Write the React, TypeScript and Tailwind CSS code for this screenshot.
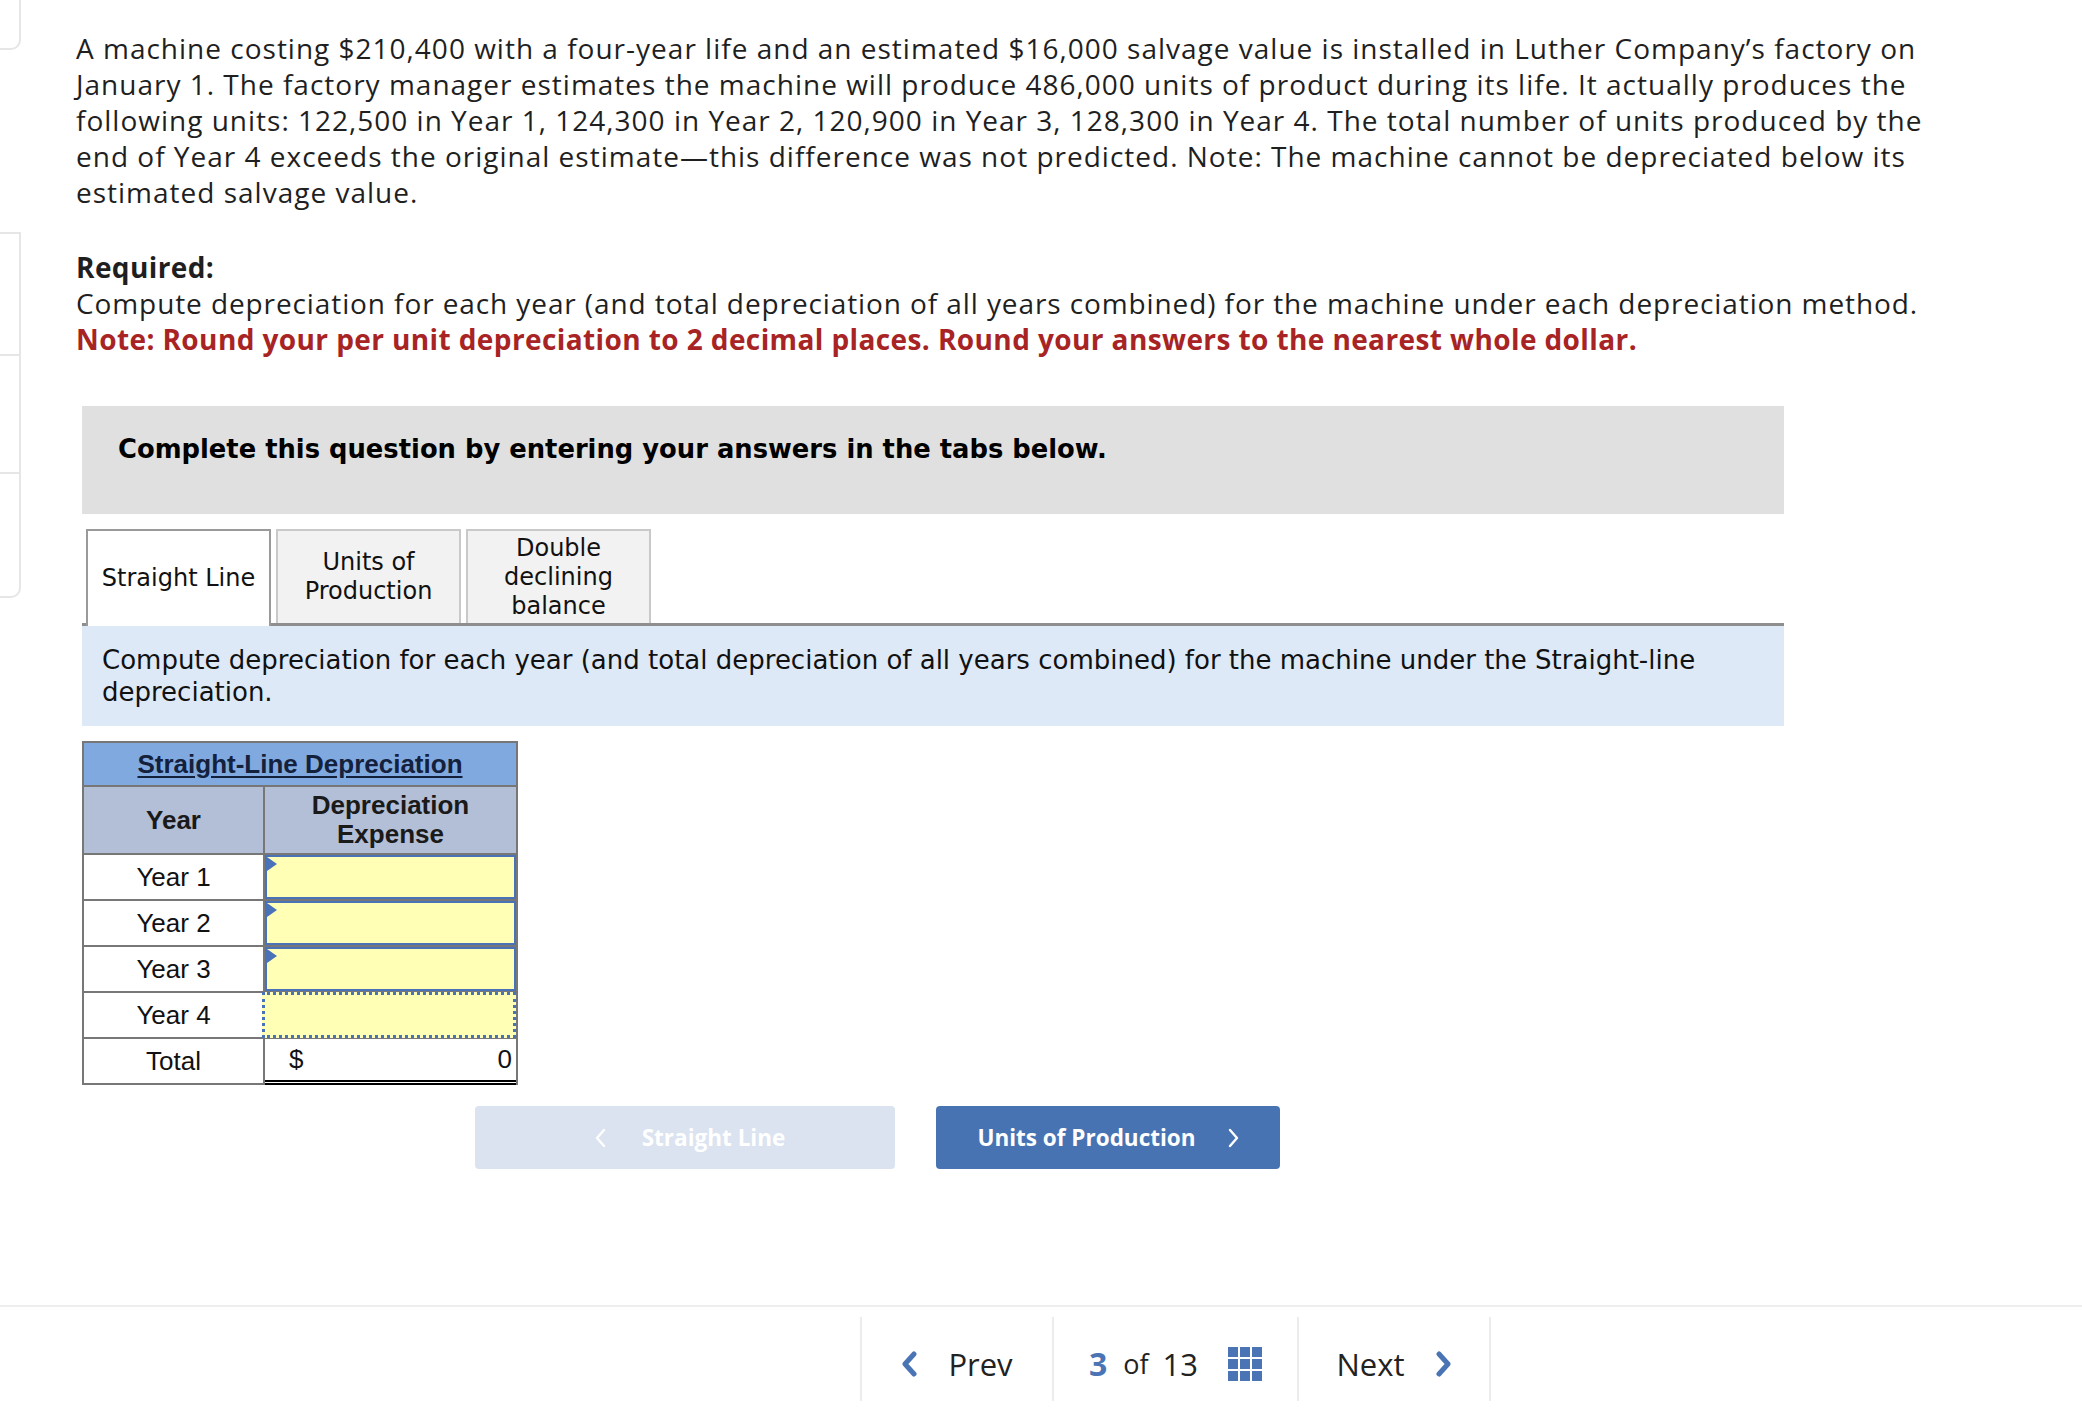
import React from 'react';

const sans = "font-['Open_Sans',sans-serif]";
const verdana = "font-['DejaVu_Sans',Verdana,sans-serif]";
const arial = "font-['Liberation_Sans',Arial,sans-serif]";

function NavChevron({ dir }: { dir: 'left' | 'right' }) {
  return (
    <svg width="17" height="26" viewBox="0 0 17 26" fill="none">
      <path
        d={dir === 'left' ? 'M13 3 L4 13 L13 23' : 'M4 3 L13 13 L4 23'}
        stroke="#4a74b4"
        strokeWidth="5"
        strokeLinecap="round"
        strokeLinejoin="round"
      />
    </svg>
  );
}

function BtnChevron({ dir }: { dir: 'left' | 'right' }) {
  return (
    <svg width="11" height="20" viewBox="0 0 11 20" fill="none">
      <path
        d={dir === 'left' ? 'M9 2 L2 10 L9 18' : 'M2 2 L9 10 L2 18'}
        stroke="#ffffff"
        strokeWidth="2.4"
        strokeLinecap="round"
        strokeLinejoin="round"
      />
    </svg>
  );
}

function InputRow({ label, focused }: { label: string; focused?: boolean }) {
  return (
    <div className="flex h-[46px] border-b-2 border-[#777777]">
      <div className="w-[181px] border-r-2 border-[#777777] flex items-center justify-center text-[26px] text-[#111]">
        {label}
      </div>
      <div className="flex-1 relative">
        {focused ? (
          <div className="absolute -inset-y-[1px] -left-[3px] right-0 bg-[#ffffb5] border-[3px] border-dotted border-[#4a72b8]" />
        ) : (
          <div className="absolute inset-0 bg-[#ffffb5] border-2 border-[#4a72b8]">
            <div className="absolute left-0 top-0 w-0 h-0 border-y-[7px] border-y-transparent border-l-[10px] border-l-[#4a72b8]" />
          </div>
        )}
      </div>
    </div>
  );
}

export default function App() {
  return (
    <div className="min-h-[1422px] w-full bg-white flex flex-col text-[#1f1f1f]">
      <div className="flex">
        {/* clipped sidebar cards */}
        <div className="w-[21px] shrink-0 flex flex-col">
          <div className="h-[50px] border-r-2 border-b-2 border-[#e6e6e6] rounded-br-[10px]" />
          <div className="mt-[182px] h-[366px] border-t-2 border-r-2 border-b-2 border-[#e6e6e6] rounded-br-[10px] flex flex-col">
            <div className="h-[122px] border-b-2 border-[#e6e6e6]" />
            <div className="h-[118px] border-b-2 border-[#e6e6e6]" />
          </div>
        </div>

        <div className="pl-[55px] pt-[30px] flex flex-col">
          <p className={`${sans} text-[28px] leading-[36px] tracking-[1px] whitespace-nowrap`}>
            A machine costing $210,400 with a four-year life and an estimated $16,000 salvage value is installed in Luther Company’s factory on
            <br />
            January 1. The factory manager estimates the machine will produce 486,000 units of product during its life. It actually produces the
            <br />
            following units: 122,500 in Year 1, 124,300 in Year 2, 120,900 in Year 3, 128,300 in Year 4. The total number of units produced by the
            <br />
            end of Year 4 exceeds the original estimate—this difference was not predicted. Note: The machine cannot be depreciated below its
            <br />
            estimated salvage value.
          </p>

          <div className={`${sans} text-[28px] leading-[36px] mt-[39px] whitespace-nowrap`}>
            <div className="font-bold tracking-[0.4px]">Required:</div>
            <div className="tracking-[0.9px]">
              Compute depreciation for each year (and total depreciation of all years combined) for the machine under each depreciation method.
            </div>
            <div className="font-bold tracking-[0.4px] text-[#a82424]">
              Note: Round your per unit depreciation to 2 decimal places. Round your answers to the nearest whole dollar.
            </div>
          </div>

          <div className={`${verdana} ml-[6px] mt-[49px] w-[1702px] h-[108px] bg-[#e0e0e0] pl-[36px] pt-[28px] text-[25.8px] leading-[30px] font-bold text-black`}>
            Complete this question by entering your answers in the tabs below.
          </div>

          <div className={`${verdana} ml-[6px] mt-[15px] w-[1702px] flex items-end gap-[5px] pl-[4px] border-b-[3px] border-[#8e8e8e] text-[24px] leading-[29px] text-[#111]`}>
            <div className="w-[185px] h-[97px] -mb-[3px] bg-white border-2 border-b-0 border-[#9a9a9a] flex items-center justify-center text-center">
              Straight Line
            </div>
            <div className="w-[185px] h-[94px] bg-[#f2f2f2] border-2 border-b-0 border-[#c9c9c9] flex items-center justify-center text-center">
              Units of
              <br />
              Production
            </div>
            <div className="w-[185px] h-[94px] bg-[#f2f2f2] border-2 border-b-0 border-[#c9c9c9] flex items-center justify-center text-center">
              Double
              <br />
              declining
              <br />
              balance
            </div>
          </div>

          <div className={`${verdana} ml-[6px] w-[1702px] bg-[#dde9f7] px-[20px] pt-[18px] pb-[18px] text-[26px] leading-[32px] text-[#111] whitespace-nowrap`}>
            Compute depreciation for each year (and total depreciation of all years combined) for the machine under the Straight-line
            <br />
            depreciation.
          </div>

          {/* Straight-line table */}
          <div className={`${arial} ml-[6px] mt-[15px] w-[436px] border-2 border-[#777777]`}>
            <div className="h-[44px] bg-[#80aadf] border-b-2 border-[#777777] flex items-center justify-center">
              <span className="text-[26px] font-bold underline underline-offset-[3px] text-[#14213d]">
                Straight-Line Depreciation
              </span>
            </div>
            <div className="flex h-[68px] bg-[#b3bfd6] border-b-2 border-[#777777] font-bold text-[26px] leading-[29px] text-[#1a1a1a]">
              <div className="w-[181px] border-r-2 border-[#777777] flex items-center justify-center">Year</div>
              <div className="flex-1 flex items-center justify-center text-center">
                Depreciation
                <br />
                Expense
              </div>
            </div>
            <InputRow label="Year 1" />
            <InputRow label="Year 2" />
            <InputRow label="Year 3" />
            <InputRow label="Year 4" focused />
            <div className="flex h-[44px] text-[26px] text-[#111]">
              <div className="w-[181px] border-r-2 border-[#777777] flex items-center justify-center">Total</div>
              <div className="flex-1 flex items-center justify-between pl-[24px] pr-[4px] border-b-[5px] border-double border-black -mb-[2px]">
                <span>$</span>
                <span>0</span>
              </div>
            </div>
          </div>

          {/* step buttons */}
          <div className={`${sans} ml-[399px] mt-[21px] flex gap-[41px] font-bold text-[22.5px] text-white`}>
            <div className="w-[420px] h-[63px] rounded-[4px] bg-[#dae3ef] flex items-center justify-center gap-[36px] pl-[10px]">
              <BtnChevron dir="left" />
              <span>Straight Line</span>
            </div>
            <div className="w-[344px] h-[63px] rounded-[4px] bg-[#4873b3] flex items-center justify-center gap-[32px]">
              <span>Units of Production</span>
              <BtnChevron dir="right" />
            </div>
          </div>
        </div>
      </div>

      {/* footer navigation */}
      <div className="mt-[136px] border-t-2 border-[#eeeeee] pt-[10px]">
        <div className={`${sans} ml-[860px] flex h-[84px] text-[31px] text-[#222]`}>
          <div className="w-[192px] pt-[10px] border-l-2 border-[#ececec] flex items-center justify-center gap-[30px]">
            <NavChevron dir="left" />
            <span>Prev</span>
          </div>
          <div className="w-[245px] pt-[10px] border-l-2 border-[#ececec] flex items-center justify-center">
            <span className="font-bold text-[32px] text-[#4a74b4]">3</span>
            <span className="ml-[16px] text-[27px]">of</span>
            <span className="ml-[14px]">13</span>
            <div className="ml-[30px] grid grid-cols-3 gap-[2px]">
              {Array.from({ length: 9 }).map((_, i) => (
                <div key={i} className="w-[10px] h-[10px] bg-[#4a74b4]" />
              ))}
            </div>
          </div>
          <div className="w-[194px] pt-[10px] border-l-2 border-r-2 border-[#ececec] flex items-center justify-center gap-[30px]">
            <span>Next</span>
            <NavChevron dir="right" />
          </div>
        </div>
      </div>
    </div>
  );
}
